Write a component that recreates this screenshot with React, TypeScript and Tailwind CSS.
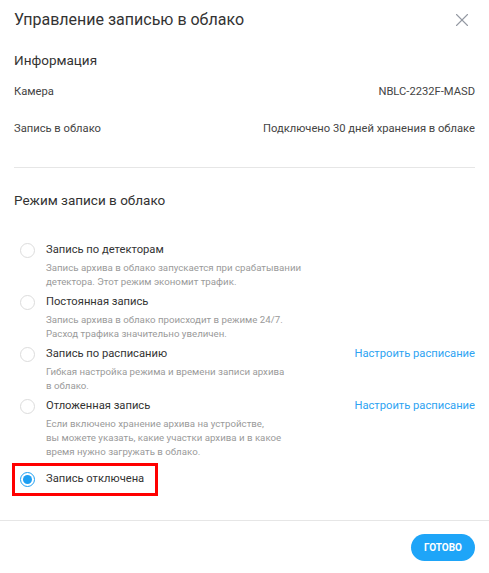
import { X } from "lucide-react";

type Mode = {
  id: string;
  title: string;
  description: string[];
  link?: string;
};

const modes: Mode[] = [
  {
    id: "detectors",
    title: "Запись по детекторам",
    description: [
      "Запись архива в облако запускается при срабатывании",
      "детектора. Этот режим экономит трафик.",
    ],
  },
  {
    id: "constant",
    title: "Постоянная запись",
    description: [
      "Запись архива в облако происходит в режиме 24/7.",
      "Расход трафика значительно увеличен.",
    ],
  },
  {
    id: "schedule",
    title: "Запись по расписанию",
    description: [
      "Гибкая настройка режима и времени записи архива",
      "в облако.",
    ],
    link: "Настроить расписание",
  },
  {
    id: "delayed",
    title: "Отложенная запись",
    description: [
      "Если включено хранение архива на устройстве,",
      "вы можете указать, какие участки архива и в какое",
      "время нужно загружать в облако.",
    ],
    link: "Настроить расписание",
  },
];

function Radio({ checked }: { checked?: boolean }) {
  return (
    <span
      className={
        checked
          ? "flex h-[15px] w-[15px] shrink-0 items-center justify-center rounded-full border border-[#1e9ff2]"
          : "h-[15px] w-[15px] shrink-0 rounded-full border border-[#dcdcdc]"
      }
    >
      {checked && <span className="h-[9px] w-[9px] rounded-full bg-[#1e9ff2]" />}
    </span>
  );
}

export default function App() {
  return (
    <div className="flex min-h-[573px] w-[489px] flex-col bg-white font-['Roboto',sans-serif] text-[#333]">
      <div className="flex h-[40px] items-center justify-between pl-[14px] pr-[16px]">
        <h1 className="text-[16px]">Управление записью в облако</h1>
        <X className="h-[22px] w-[22px] text-[#9499a2]" strokeWidth={1.2} />
      </div>

      <div className="px-[14px]">
        <h2 className="flex h-[40px] items-center text-[13.5px]">Информация</h2>

        <div className="flex h-[24px] items-center justify-between text-[11.2px] text-[#444]">
          <span>Камера</span>
          <span>NBLC-2232F-MASD</span>
        </div>
        <div className="mt-[13px] flex h-[24px] items-center justify-between text-[11.2px] text-[#444]">
          <span>Запись в облако</span>
          <span>Подключено 30 дней хранения в облаке</span>
        </div>

        <div className="mt-[26px] h-px bg-[#e6e6e6]" />

        <h2 className="mt-[20px] flex h-[24px] items-center text-[13.5px]">
          Режим записи в облако
        </h2>

        <div className="mt-[29px] flex flex-col gap-[4px]">
          {modes.map((mode) => (
            <div key={mode.id} className="flex items-start pl-[6px]">
              <div className="flex h-[18px] items-center">
                <Radio />
              </div>
              <div className="ml-[11px] flex-1">
                <div className="flex h-[18px] items-center justify-between">
                  <span className="text-[11.2px] text-[#333]">{mode.title}</span>
                  {mode.link && (
                    <a className="text-[11.2px] text-[#2ea3f2]" href="#">
                      {mode.link}
                    </a>
                  )}
                </div>
                <div className="mt-[2px] text-[9.7px] leading-[14px] text-[#9a9a9a]">
                  {mode.description.map((line) => (
                    <div key={line}>{line}</div>
                  ))}
                </div>
              </div>
            </div>
          ))}

          <div className="-ml-[2px] flex h-[33px] w-[146px] items-center border-[3px] border-[#f00] pl-[5px]">
            <Radio checked />
            <span className="ml-[11px] text-[11.2px] text-[#333]">Запись отключена</span>
          </div>
        </div>
      </div>

      <div className="mt-auto">
        <div className="h-px bg-[#e6e6e6]" />
        <div className="flex h-[52px] items-center justify-end px-[14px]">
          <button className="h-[27px] rounded-full bg-[#1ea5f8] px-[13px] text-[10px] font-bold text-white">
            ГОТОВО
          </button>
        </div>
      </div>
    </div>
  );
}
